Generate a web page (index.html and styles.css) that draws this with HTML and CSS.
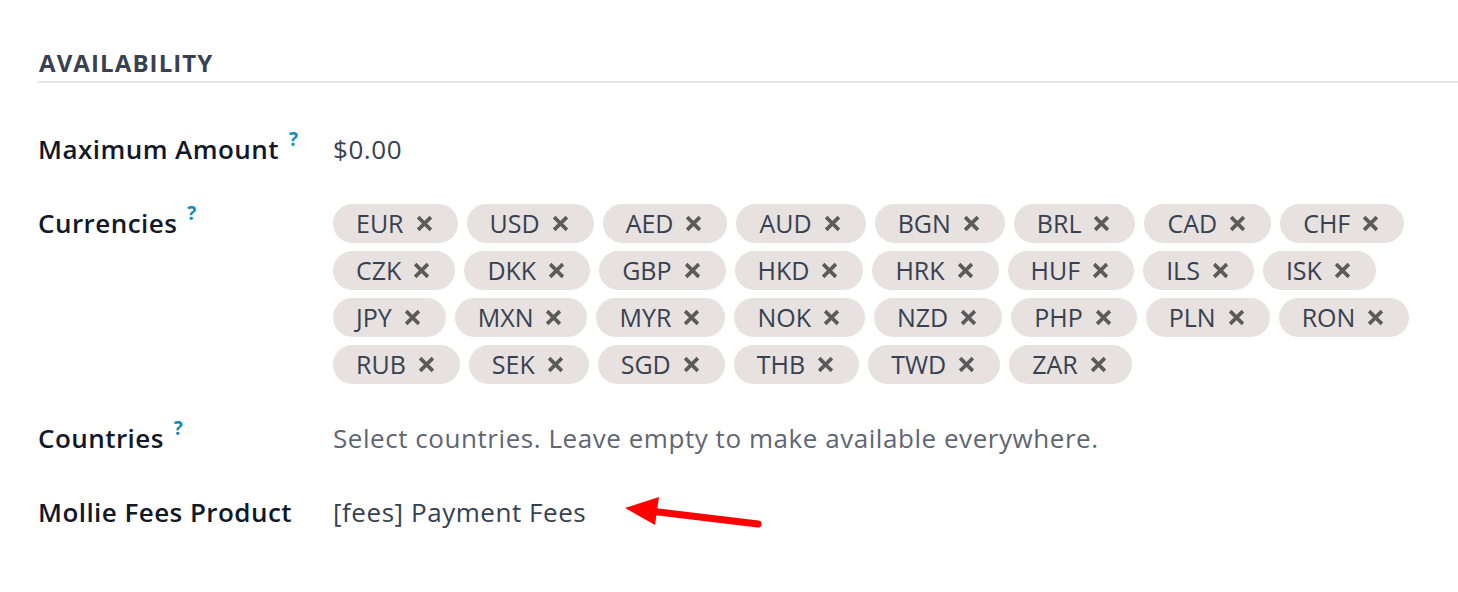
FILE: index.html
```html
<!DOCTYPE html>
<html lang="en">
<head>
<meta charset="utf-8">
<title>Availability</title>
<link rel="stylesheet" href="styles.css">
</head>
<body>
<div class="page">
  <div class="section-title">AVAILABILITY</div>
  <div class="form">
    <div class="label">Maximum Amount<span class="help">?</span></div>
    <div class="value">$0.00</div>

    <div class="label">Currencies<span class="help">?</span></div>
    <div class="tags">
      <span class="tag">EUR<svg class="x" viewBox="0 0 16 16"><path d="M2 2L14 14M14 2L2 14"/></svg></span>
      <span class="tag">USD<svg class="x" viewBox="0 0 16 16"><path d="M2 2L14 14M14 2L2 14"/></svg></span>
      <span class="tag">AED<svg class="x" viewBox="0 0 16 16"><path d="M2 2L14 14M14 2L2 14"/></svg></span>
      <span class="tag">AUD<svg class="x" viewBox="0 0 16 16"><path d="M2 2L14 14M14 2L2 14"/></svg></span>
      <span class="tag">BGN<svg class="x" viewBox="0 0 16 16"><path d="M2 2L14 14M14 2L2 14"/></svg></span>
      <span class="tag">BRL<svg class="x" viewBox="0 0 16 16"><path d="M2 2L14 14M14 2L2 14"/></svg></span>
      <span class="tag">CAD<svg class="x" viewBox="0 0 16 16"><path d="M2 2L14 14M14 2L2 14"/></svg></span>
      <span class="tag">CHF<svg class="x" viewBox="0 0 16 16"><path d="M2 2L14 14M14 2L2 14"/></svg></span>
      <span class="tag">CZK<svg class="x" viewBox="0 0 16 16"><path d="M2 2L14 14M14 2L2 14"/></svg></span>
      <span class="tag">DKK<svg class="x" viewBox="0 0 16 16"><path d="M2 2L14 14M14 2L2 14"/></svg></span>
      <span class="tag">GBP<svg class="x" viewBox="0 0 16 16"><path d="M2 2L14 14M14 2L2 14"/></svg></span>
      <span class="tag">HKD<svg class="x" viewBox="0 0 16 16"><path d="M2 2L14 14M14 2L2 14"/></svg></span>
      <span class="tag">HRK<svg class="x" viewBox="0 0 16 16"><path d="M2 2L14 14M14 2L2 14"/></svg></span>
      <span class="tag">HUF<svg class="x" viewBox="0 0 16 16"><path d="M2 2L14 14M14 2L2 14"/></svg></span>
      <span class="tag">ILS<svg class="x" viewBox="0 0 16 16"><path d="M2 2L14 14M14 2L2 14"/></svg></span>
      <span class="tag">ISK<svg class="x" viewBox="0 0 16 16"><path d="M2 2L14 14M14 2L2 14"/></svg></span>
      <span class="tag">JPY<svg class="x" viewBox="0 0 16 16"><path d="M2 2L14 14M14 2L2 14"/></svg></span>
      <span class="tag">MXN<svg class="x" viewBox="0 0 16 16"><path d="M2 2L14 14M14 2L2 14"/></svg></span>
      <span class="tag">MYR<svg class="x" viewBox="0 0 16 16"><path d="M2 2L14 14M14 2L2 14"/></svg></span>
      <span class="tag">NOK<svg class="x" viewBox="0 0 16 16"><path d="M2 2L14 14M14 2L2 14"/></svg></span>
      <span class="tag">NZD<svg class="x" viewBox="0 0 16 16"><path d="M2 2L14 14M14 2L2 14"/></svg></span>
      <span class="tag">PHP<svg class="x" viewBox="0 0 16 16"><path d="M2 2L14 14M14 2L2 14"/></svg></span>
      <span class="tag">PLN<svg class="x" viewBox="0 0 16 16"><path d="M2 2L14 14M14 2L2 14"/></svg></span>
      <span class="tag">RON<svg class="x" viewBox="0 0 16 16"><path d="M2 2L14 14M14 2L2 14"/></svg></span>
      <span class="tag">RUB<svg class="x" viewBox="0 0 16 16"><path d="M2 2L14 14M14 2L2 14"/></svg></span>
      <span class="tag">SEK<svg class="x" viewBox="0 0 16 16"><path d="M2 2L14 14M14 2L2 14"/></svg></span>
      <span class="tag">SGD<svg class="x" viewBox="0 0 16 16"><path d="M2 2L14 14M14 2L2 14"/></svg></span>
      <span class="tag">THB<svg class="x" viewBox="0 0 16 16"><path d="M2 2L14 14M14 2L2 14"/></svg></span>
      <span class="tag">TWD<svg class="x" viewBox="0 0 16 16"><path d="M2 2L14 14M14 2L2 14"/></svg></span>
      <span class="tag">ZAR<svg class="x" viewBox="0 0 16 16"><path d="M2 2L14 14M14 2L2 14"/></svg></span>
    </div>

    <div class="label">Countries<span class="help">?</span></div>
    <div class="value placeholder">Select countries. Leave empty to make available everywhere.</div>

    <div class="label">Mollie Fees Product</div>
    <div class="value">[fees] Payment Fees</div>
  </div>
  <svg class="arrow" viewBox="0 0 1458 592" width="1458" height="592">
    <line x1="758" y1="524" x2="650" y2="511" stroke="#ff0000" stroke-width="7" stroke-linecap="round"/>
    <polygon points="625,508 659,497 655,525" fill="#ff0000"/>
  </svg>
</div>
</body>
</html>
```
FILE: styles.css
```css
html, body {
  margin: 0;
  padding: 0;
  background: #ffffff;
}

.page {
  position: relative;
  width: 1458px;
  height: 592px;
  padding: 48px 0 0 38px;
  box-sizing: border-box;
  font-family: "Open Sans", "Noto Sans", sans-serif;
  overflow: hidden;
}

.section-title {
  font-size: 24px;
  line-height: 30px;
  font-weight: 700;
  color: #374151;
  padding-left: 1px;
  padding-bottom: 3px;
  border-bottom: 2px solid #e4e4e4;
  letter-spacing: 1.1px;
}

.form {
  margin-top: 47px;
  display: grid;
  grid-template-columns: 295px 1fr;
  row-gap: 36px;
}

.label {
  font-size: 26px;
  line-height: 38px;
  font-weight: 600;
  color: #111827;
  white-space: nowrap;
  letter-spacing: 0.45px;
}

.help {
  display: inline-block;
  vertical-align: top;
  font-size: 19px;
  line-height: 18px;
  font-weight: 700;
  color: #0e8fb3;
  margin-left: 10px;
  margin-top: 0;
  letter-spacing: 0;
}

.value {
  font-size: 26px;
  line-height: 38px;
  color: #374151;
  letter-spacing: 0.55px;
}

.placeholder {
  color: #5f6673;
}

.tags {
  display: flex;
  flex-wrap: wrap;
  gap: 8px 9px;
  width: 1115px;
  margin-bottom: -1px;
}

.tag {
  display: inline-flex;
  align-items: center;
  height: 39px;
  padding: 0 25px 0 23px;
  border-radius: 20px;
  background: #e7e1e0;
  color: #374151;
  font-size: 25px;
  line-height: 39px;
}

.x {
  width: 17px;
  height: 17px;
  margin-left: 12px;
  fill: none;
  stroke: #5b5b5b;
  stroke-width: 3.4;
  stroke-linecap: butt;
}

.arrow {
  position: absolute;
  left: 0;
  top: 0;
  pointer-events: none;
}
```
